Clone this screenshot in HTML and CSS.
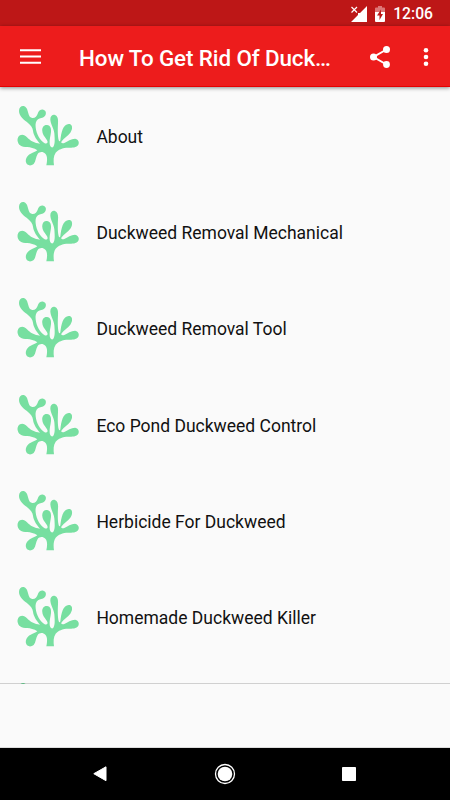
FILE: index.html
```html
<!DOCTYPE html>
<html lang="en">
<head>
    <meta charset="UTF-8">
    <meta name="viewport" content="width=device-width, initial-scale=1.0">

    <link rel="stylesheet" href="styles.css">

    <title>How To Get Rid Of Duckweed</title>
</head>
<body>
    <svg class="symbols" width="0" height="0">
        <symbol id="weed" viewBox="0 0 240 228">
            <path d="M115 202C118 188 119 174 112 167C105 160 94 161 89 168C83 177 84 190 77 198C69 205 56 203 54 193C51 181 60 171 68 167C76 163 82 161 88 157C78 150 67 148 58 147C50 146 41 147 34 140C26 131 27 117 36 112C44 108 51 112 57 118C66 128 80 136 96 137C88 128 76 112 75 98C74 88 68 82 60 75C50 66 33 56 33 39C33 27 42 22 49 25C57 28 59 38 61 46C63 55 67 60 73 60C81 61 87 54 89 47C91 39 98 34 106 35C115 37 116 48 110 55C104 61 96 60 90 64C83 69 82 78 83 88C85 108 96 128 110 136C118 138 121 134 117 127C113 119 104 112 103 100C101 88 108 80 117 81C128 82 130 93 129 102C128 112 124 125 125 136C125 147 132 151 136 146C142 138 140 120 139 106C138 92 127 78 127 64C127 54 134 49 141 51C150 54 151 66 150 76C149 95 149 115 152 126C153 131 156 131 157 127C158 118 160 104 164 94C168 83 178 75 187 79C195 83 193 96 187 104C180 113 168 120 161 130C157 136 164 137 169 135C178 130 190 122 201 122C210 123 215 132 211 140C206 149 192 149 181 149C164 149 150 155 143 164C136 174 136 188 138 202Z"/>
        </symbol>
    </svg>

    <div class="status">
        <svg class="signal" width="16" height="16" viewBox="0 0 16 16">
            <path d="M16 0V16H0L7 9V7H9Z" fill="#fff"/>
            <path d="M0.500 1L6 6.500M6 1L0.500 6.500" stroke="#fff" stroke-width="1.2"/>
        </svg>
        <svg class="battery" width="10" height="16" viewBox="0 0 10 16">
            <path d="M3 0H7V1.500H9Q10 1.500 10 2.500V7H0V2.500Q0 1.500 1 1.500H3Z" fill="#dd7777"/>
            <path d="M0 6H10V15Q10 16 9 16H1Q0 16 0 15Z" fill="#fff"/>
            <path d="M6 3.500L2 9.500H4.500V14L8 8H6Z" fill="#bd1717"/>
        </svg>
        <span class="time">12:06</span>
    </div>

    <div class="toolbar">
        <svg class="menu" width="21" height="16" viewBox="0 0 21 16">
            <path d="M0 1.300H21M0 7.500H21M0 13.700H21" stroke="#fff" stroke-width="2"/>
        </svg>
        <div class="title">How To Get Rid Of Duck…</div>
        <svg class="share" width="20" height="22" viewBox="0 0 20 22">
            <path d="M16.500 3.500L3.500 11L16.500 18.500" fill="none" stroke="#fff" stroke-width="2"/>
            <circle cx="16.500" cy="3.500" r="3.500" fill="#fff"/>
            <circle cx="3.500" cy="11" r="3.500" fill="#fff"/>
            <circle cx="16.500" cy="18.500" r="3.400" fill="#fff"/>
        </svg>
        <svg class="more" width="6" height="18" viewBox="0 0 6 18">
            <circle cx="3" cy="2.300" r="2.300" fill="#fff"/>
            <circle cx="3" cy="9" r="2.300" fill="#fff"/>
            <circle cx="3" cy="15.700" r="2.300" fill="#fff"/>
        </svg>
    </div>

    <div class="list">
        <div class="item"><svg class="icon"><use href="#weed"/></svg><span>About</span></div>
        <div class="item"><svg class="icon"><use href="#weed"/></svg><span>Duckweed Removal Mechanical</span></div>
        <div class="item"><svg class="icon"><use href="#weed"/></svg><span>Duckweed Removal Tool</span></div>
        <div class="item"><svg class="icon"><use href="#weed"/></svg><span>Eco Pond Duckweed Control</span></div>
        <div class="item"><svg class="icon"><use href="#weed"/></svg><span>Herbicide For Duckweed</span></div>
        <div class="item"><svg class="icon"><use href="#weed"/></svg><span>Homemade Duckweed Killer</span></div>
        <div class="item"><svg class="icon"><use href="#weed"/></svg></div>
    </div>

    <div class="banner"></div>

    <div class="navbar">
        <svg width="14" height="16" viewBox="0 0 14 16">
            <path d="M13 0.800V14.700L0.800 7.700Z" fill="#fff" stroke="#fff" stroke-linejoin="round"/>
        </svg>
        <svg width="22" height="22" viewBox="0 0 22 22">
            <circle cx="11" cy="11" r="9.500" fill="none" stroke="#fff" stroke-width="1.300"/>
            <circle cx="11" cy="11" r="7.300" fill="#fff"/>
        </svg>
        <svg width="14" height="14" viewBox="0 0 14 14">
            <rect width="14" height="14" rx="0.800" fill="#fff"/>
        </svg>
    </div>
</body>
</html>
```
FILE: styles.css
```css
body {
    margin: 0;
    width: 450px;
    height: 800px;
    display: flex;
    flex-direction: column;
    overflow: hidden;
    background-color: #fafafa;
    font-family: Roboto, sans-serif;
}

.symbols {
    position: absolute;
}

.status {
    display: flex;
    align-items: center;
    justify-content: flex-end;
    height: 26px;
    padding-top: 2px;
    padding-right: 17px;
    box-sizing: border-box;
    background-color: #bd1717;
    color: white;
}

.battery {
    margin-left: 8px;
    margin-right: 8px;
}

.time {
    font-size: 15.7px;
    font-weight: 500;
    line-height: 24px;
}

.toolbar {
    display: flex;
    align-items: center;
    flex: none;
    height: 61px;
    padding: 1px 21px 0 20px;
    box-sizing: border-box;
    background-color: #ed1c1c;
    border-bottom: 1px solid #e60000;
    box-shadow: 0 1px 4px rgba(0, 0, 0, 0.45);
    color: white;
    z-index: 1;
}

.title {
    flex: 1;
    margin-left: 38px;
    padding-top: 2px;
    font-size: 22.4px;
    font-weight: 500;
    letter-spacing: -0.1px;
    white-space: nowrap;
}

.more {
    margin-left: 33px;
}

.list {
    height: 597px;
    padding-top: 1px;
    box-sizing: border-box;
    overflow: hidden;
}

.item {
    display: flex;
    align-items: center;
    height: 96.2px;
    padding-left: 8px;
    font-size: 17.5px;
    color: #111;
}

.item span {
    padding-top: 2px;
}

.icon {
    width: 80px;
    height: 76px;
    margin-right: 8.4px;
    fill: #77dfa0;
}

/* overlaps the last pixel row of the list */
.banner {
    height: 65px;
    margin-top: -1px;
    box-sizing: border-box;
    border-top: 1px solid rgba(0, 0, 0, 0.17);
    border-bottom: 1px solid #dcdcdc;
    z-index: 1;
}

.navbar {
    display: flex;
    align-items: center;
    justify-content: space-between;
    height: 52px;
    padding: 0 94px 0 93px;
    box-sizing: border-box;
    background-color: black;
}
```
